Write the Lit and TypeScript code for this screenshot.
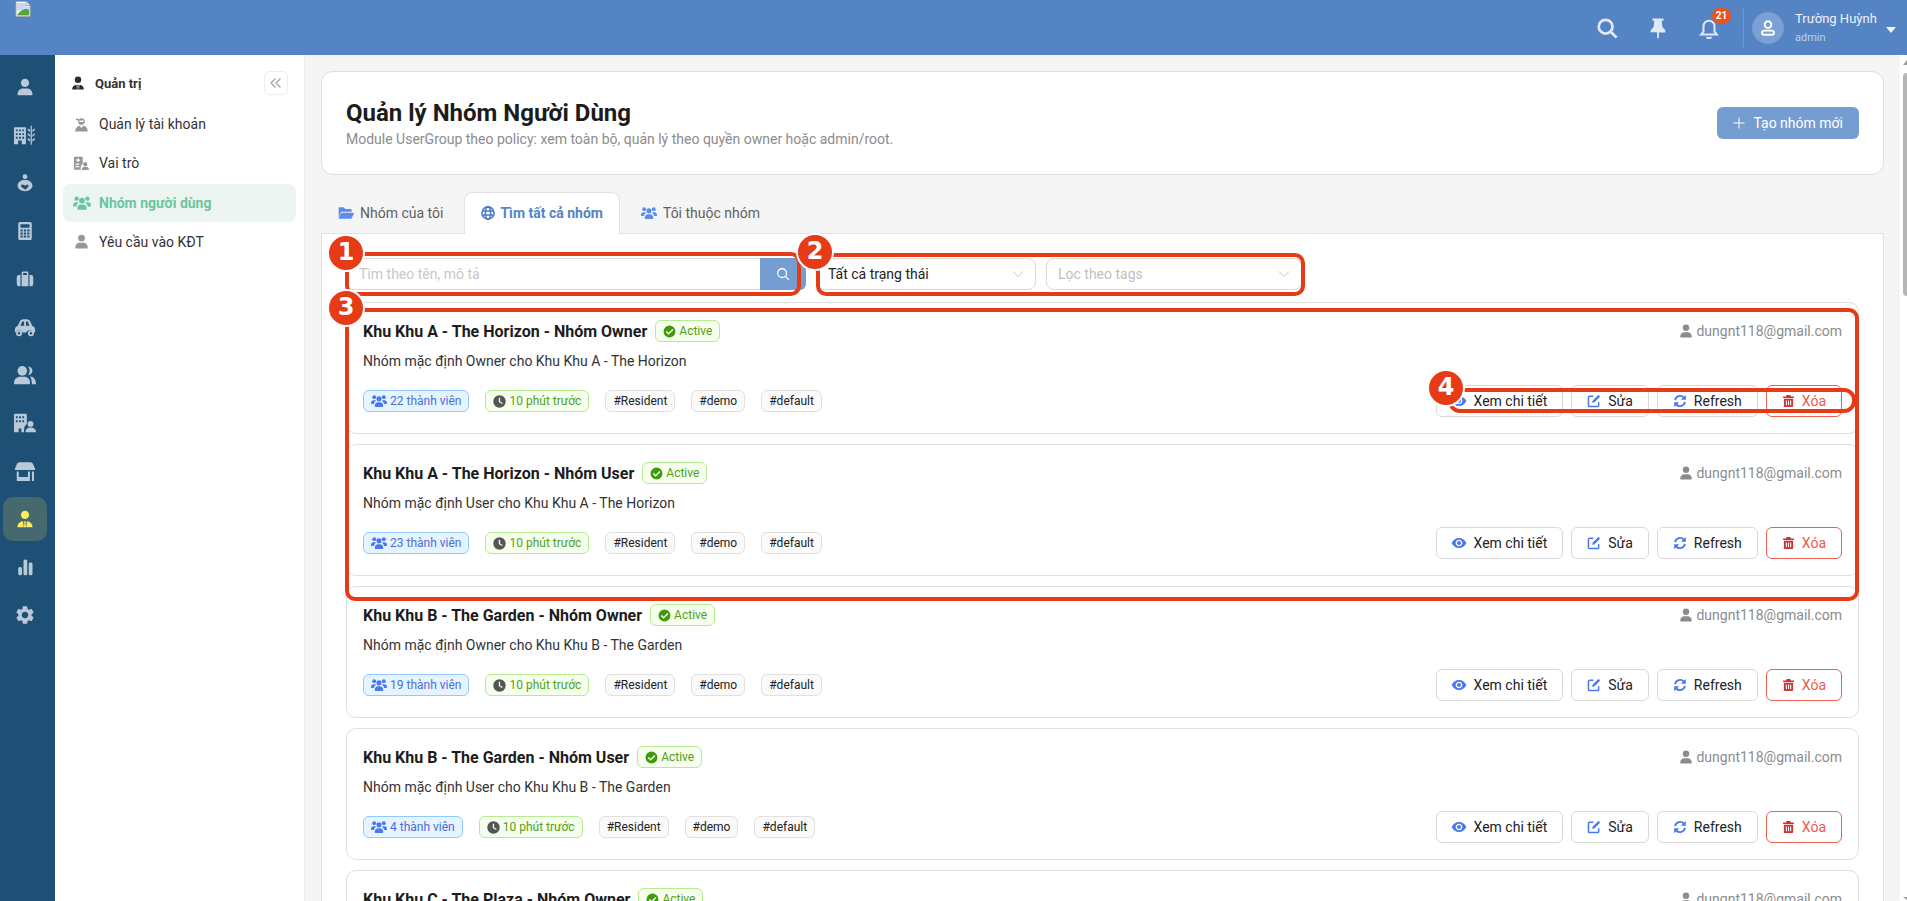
/**
 * app-root — "Quản lý Nhóm Người Dùng" admin page with numbered red callouts on top.
 */

import { LitElement, html, svg, css } from 'lit';
import { customElement } from 'lit/decorators.js';

const ICONS: Record<string, unknown> = {
  user: svg`<circle cx="12" cy="6.5" r="5.5"/><path d="M2 22c0-5 3.5-8 7-8h6c3.5 0 7 3 7 8 0 .6-.4 1-1 1H3c-.6 0-1-.4-1-1z"/>`,
  cityWheat: svg`<path fill-rule="evenodd" d="M0 3.5h13V22H8.5v-4h-4v4H0z M2 6v2h2V6z M5.5 6v2h2V6z M9 6v2h2V6z M2 10v2h2v-2z M5.5 10v2h2v-2z M9 10v2h2v-2z M2 14v2h2v-2z M5.5 14v2h2v-2z M9 14v2h2v-2z"/><path d="M18.2 2h1.3v20.5h-1.3z M15 4.5l2.6 2v2.2L15 6.7z M22.6 4.5L20 6.5v2.2l2.6-2z M15 9.7l2.6 2v2.3L15 12z M22.6 9.7L20 11.7V14l2.6-2z M15 15l2.6 2v2.3L15 17.3z M22.6 15L20 17v2.3l2.6-2z"/>`,
  careHeart: svg`<circle cx="12" cy="3.5" r="3.2"/><path fill-rule="evenodd" d="M12 7.5c5.5 0 10 3.8 10 8.2 0 4-4.5 7.3-10 7.3S2 19.700 2 15.700C2 11.300 6.500 7.500 12 7.500z M8.500 14c-1.800 0-2.500 2.400-.8 3.800l4.800 3.200 3.600-3.800c1.400-1.600 0-3.400-1.600-3-1 .2-1.700 1-2.200 1.600-.7-.8-2-1.800-3.800-1.800z"/>`,
  calculator: svg`<path fill-rule="evenodd" d="M5 0h14a2 2 0 0 1 2 2v20a2 2 0 0 1-2 2H5a2 2 0 0 1-2-2V2a2 2 0 0 1 2-2z M6 3v4.500h12V3z M6 10v2.500h3V10z M10.500 10v2.500h3V10z M15 10v2.500h3V10z M6 14v2.500h3V14z M10.500 14v2.500h3V14z M15 14v2.500h3V14z M6 18v2.500h3V18z M10.500 18v2.500h3V18z M15 18v2.500h3V18z"/>`,
  suitcase: svg`<path fill-rule="evenodd" d="M7.500 21.500V4c0-1.100.9-2 2-2h5c1.100 0 2 .9 2 2v17.500z M9.500 4v2.500h5V4z"/><path d="M6 6.500v15H4a3 3 0 0 1-3-3v-9a3 3 0 0 1 3-3z M18 6.500v15h2a3 3 0 0 0 3-3v-9a3 3 0 0 0-3-3z"/>`,
  car: svg`<path fill-rule="evenodd" d="M1 15c0-2 1-3.500 3-4l2.300-5C7 4.500 8.200 3.500 10 3.500h4c1.800 0 3 1 3.700 2.500l2.300 5c2 .5 3 2 3 4v2c0 .6-.4 1-1 1h-1.200a3.800 3.800 0 0 0-7.300 0H9.200a3.800 3.800 0 0 0-7.300 0H2c-.6 0-1-.4-1-1z M8.800 6.200L7 10.500h4V6h-1c-.5 0-1 0-1.200.2z M13 6v4.500h4l-1.800-4.300C15 6 14.500 6 14 6z"/><path fill-rule="evenodd" d="M5.500 15.500a3.300 3.300 0 1 1 0 6.600 3.300 3.300 0 0 1 0-6.600z M5.500 17.500a1.300 1.300 0 1 0 0 2.600 1.300 1.300 0 0 0 0-2.600z M18.500 15.500a3.300 3.300 0 1 1 0 6.600 3.300 3.300 0 0 1 0-6.600z M18.500 17.500a1.300 1.300 0 1 0 0 2.600 1.300 1.300 0 0 0 0-2.600z"/>`,
  users: svg`<circle cx="9" cy="7.500" r="5.200"/><path d="M0 21c0-4.500 3-7 7-7h4c4 0 6.500 2.500 6.500 7 0 .6-.4 1-1 1H1c-.6 0-1-.4-1-1z"/><path d="M15.500 2.800a4.500 4.500 0 1 1 0 9.200c1-1.200 1.500-2.800 1.500-4.600s-.5-3.300-1.500-4.600z M17.500 13.500c4 .3 6.500 3 6.500 8.500h-4.500c0-3.500-.5-6.500-2-8.500z"/>`,
  buildingUser: svg`<path fill-rule="evenodd" d="M1 2h12c.6 0 1 .4 1 1v10c-1.800 1-3 3.500-3 6v3H8v-4H5v4H1c-.6 0-1-.4-1-1V3c0-.6.4-1 1-1z M2 4.500v2.200h2V4.500z M5.500 4.500v2.200h2V4.500z M9 4.500v2.200h2V4.500z M2 9v2.200h2V9z M5.500 9v2.200h2V9z M9 9v2.200h2V9z"/><circle cx="18" cy="13" r="3.200"/><path d="M12.500 22c0-3.500 2-5.200 5.500-5.200s6 1.700 6 5.200z"/>`,
  store: svg`<path d="M1 9.500L3 5c.6-1.500 1.500-2.500 3.500-2.500h11c2 0 2.900 1 3.500 2.500l2 4.500c.3.900 0 1.500-1 1.500H2c-1 0-1.300-.6-1-1.500z M3 12.500h2.200v6h10v-6h2.200V22c0 .6-.4 1-1 1H4c-.6 0-1-.4-1-1z M19.600 12.500h2.200V23h-2.200z"/>`,
  userTie: svg`<circle cx="12" cy="6.500" r="5.500"/><path d="M2 23c0-4.500 2.800-7.500 7.500-8l.8 8z M22 23c0-4.500-2.800-7.500-7.500-8l-.8 8z M11 15h2l.2 1.500-.4 1 .6 5.500h-2.800l.6-5.500-.4-1z"/>`,
  chart: svg`<rect x="3" y="12" width="5" height="11" rx="2"/><rect x="10" y="2" width="5" height="21" rx="2"/><rect x="17" y="6" width="5" height="17" rx="2"/>`,
  gear: svg`<path d="M19.140 12.940c.04-.3.06-.61.06-.94 0-.32-.02-.64-.07-.94l2.030-1.580c.18-.14.23-.41.12-.61l-1.920-3.320c-.12-.22-.37-.29-.59-.22l-2.390.96c-.5-.38-1.030-.7-1.620-.94l-.36-2.540c-.04-.24-.24-.41-.48-.41h-3.840c-.24 0-.43.17-.47.41l-.36 2.540c-.59.24-1.130.57-1.620.94l-2.390-.96c-.22-.08-.47 0-.59.22L2.740 8.870c-.12.21-.08.47.12.61l2.030 1.580c-.05.3-.09.63-.09.94s.02.64.07.94l-2.030 1.580c-.18.14-.23.41-.12.61l1.920 3.320c.12.22.37.29.59.22l2.390-.96c.5.38 1.030.7 1.620.94l.36 2.540c.05.24.24.41.48.41h3.840c.24 0 .44-.17.47-.41l.36-2.540c.59-.24 1.130-.56 1.620-.94l2.390.96c.22.08.47 0 .59-.22l1.920-3.320c.12-.22.07-.47-.12-.61l-2.010-1.580zM12 15.600c-1.980 0-3.600-1.620-3.600-3.600s1.620-3.600 3.600-3.600 3.600 1.620 3.600 3.600-1.620 3.600-3.600 3.600z"/>`,
  hoodUser: svg`<path fill-rule="evenodd" d="M12 2c3.300 0 5.500 2.300 5.500 5s-2.200 5.500-5.500 5.500S6.500 10 6.500 7c0-.4 0-.7.1-1L3 4.500 3.500 2l4.700 1.500C9.200 2.600 10.500 2 12 2z M8.500 5.500v2.300h7V5.500z"/><path d="M2 23c0-5 3.500-8.500 7-9l3 3.500 3-3.500c3.500.5 7 4 7 9z"/>`,
  roleCard: svg`<path fill-rule="evenodd" d="M1 1h12c.6 0 1 .4 1 1v10.500c-2 1-3.300 3.500-3.300 6.500v3H1c-.6 0-1-.4-1-1V2c0-.6.4-1 1-1z M5.500 3.500v2.200H3.300v2h2.200v2.200h2V7.700h2.200v-2H7.500V3.500z M2.500 12v1.800h6V12z M2.500 16v1.800h6V16z"/><circle cx="18" cy="13" r="3.300"/><path d="M12.500 22.500c0-3.800 2-5.700 5.500-5.700s6 1.900 6 5.700z"/>`,
  users3: svg`<circle cx="4.800" cy="6.200" r="2.900"/><circle cx="19.200" cy="6.200" r="2.900"/><circle cx="12" cy="8.800" r="3.800"/><path d="M0 15c0-2.500 1.700-4 3.800-4h2c.7 0 1.300.2 1.800.5-1.800 1-3 3-3.100 5H1c-.6 0-1-.5-1-1.500z M24 15c0-2.500-1.700-4-3.800-4h-2c-.7 0-1.300.2-1.800.5 1.800 1 3 3 3.100 5H23c.6 0 1-.5 1-1.500z M5.700 19c0-3 2.100-5 4.800-5h3c2.700 0 4.800 2 4.800 5v1c0 .6-.4 1-1 1H6.700c-.6 0-1-.4-1-1z"/>`,
  folder: svg`<path d="M1 18.500V5c0-.8.7-1.500 1.500-1.500h6l2.500 2.500h8c.8 0 1.500.7 1.500 1.500V10H6.500c-1 0-1.800.5-2.300 1.400z"/><path d="M5.800 11.500H23c.8 0 1.200.7.900 1.400l-3.500 6.800c-.3.500-.8.800-1.400.8H1.800c-.7 0-1-.6-.7-1.200l3.400-7c.3-.5.800-.8 1.300-.8z"/>`,
  check: svg`<path fill-rule="evenodd" d="M12 1a11 11 0 1 1 0 22 11 11 0 0 1 0-22z M17.300 7.500L10.400 14.400 7 11l-1.900 1.900 5.300 5.300 8.800-8.800z"/>`,
  clock: svg`<path fill-rule="evenodd" d="M12 .5a11.500 11.500 0 1 1 0 23 11.500 11.500 0 0 1 0-23z M10.700 5v8l6 3.800 1.200-1.900-4.700-3V5z"/>`,
  eye: svg`<path d="M12 4.500C7 4.500 2.730 7.610 1 12c1.730 4.390 6 7.500 11 7.500s9.270-3.110 11-7.500c-1.730-4.390-6-7.500-11-7.500zM12 17c-2.760 0-5-2.240-5-5s2.240-5 5-5 5 2.240 5 5-2.240 5-5 5zm0-8c-1.660 0-3 1.340-3 3s1.340 3 3 3 3-1.340 3-3-1.340-3-3-3z"/>`,
  edit: svg`<path fill="none" stroke="currentColor" stroke-width="2.600" d="M20 14v5.500a2 2 0 0 1-2 2H4.500a2 2 0 0 1-2-2V6a2 2 0 0 1 2-2H11"/><path d="M9.500 11.500L18.500 2.500a1.600 1.600 0 0 1 2.300 0l.7.7a1.600 1.600 0 0 1 0 2.300l-9 9-3.500.7z"/>`,
  sync: svg`<path fill="none" stroke="currentColor" stroke-width="3.200" d="M3.500 10.500a8.800 8.800 0 0 1 15-4.500 M20.500 13.500a8.800 8.800 0 0 1-15 4.500"/><path d="M22 1.500V10h-8.500z M2 22.500V14h8.500z"/>`,
  trash: svg`<path fill-rule="evenodd" d="M8.500 1h7l1 2.500H22v3H2v-3h5.500z M3.500 8h17v13.500c0 .8-.7 1.500-1.500 1.500H5c-.8 0-1.500-.7-1.500-1.500z M7 11v9h2v-9z M11 11v9h2v-9z M15 11v9h2v-9z"/>`,
};

const icon = (name: string) => html`<svg class="ic" viewBox="0 0 24 24" fill="currentColor">${ICONS[name]}</svg>`;

const RAIL = [
  { name: 'user', size: 18 },
  { name: 'cityWheat', size: 22 },
  { name: 'careHeart', size: 18 },
  { name: 'calculator', size: 18 },
  { name: 'suitcase', size: 18 },
  { name: 'car', size: 22 },
  { name: 'users', size: 22 },
  { name: 'buildingUser', size: 22 },
  { name: 'store', size: 22 },
  { name: 'userTie', size: 18, active: true },
  { name: 'chart', size: 18 },
  { name: 'gear', size: 22 },
];

const MENU = [
  { label: 'Quản lý tài khoản', icon: 'hoodUser' },
  { label: 'Vai trò', icon: 'roleCard' },
  { label: 'Nhóm người dùng', icon: 'users3', active: true },
  { label: 'Yêu cầu vào KĐT', icon: 'user' },
];

const GROUPS = [
  { name: 'Khu Khu A - The Horizon - Nhóm Owner', desc: 'Nhóm mặc định Owner cho Khu Khu A - The Horizon', members: 22 },
  { name: 'Khu Khu A - The Horizon - Nhóm User', desc: 'Nhóm mặc định User cho Khu Khu A - The Horizon', members: 23 },
  { name: 'Khu Khu B - The Garden - Nhóm Owner', desc: 'Nhóm mặc định Owner cho Khu Khu B - The Garden', members: 19 },
  { name: 'Khu Khu B - The Garden - Nhóm User', desc: 'Nhóm mặc định User cho Khu Khu B - The Garden', members: 4 },
  { name: 'Khu Khu C - The Plaza - Nhóm Owner', desc: 'Nhóm mặc định Owner cho Khu Khu C - The Plaza', members: 16 },
];

@customElement('app-root')
export class AppRoot extends LitElement {
  static override styles = css`
    :host {
      display: block;
      position: relative;
      height: 901px;
      overflow: hidden;
      font-family: Roboto, 'Liberation Sans', sans-serif;
      font-size: 14px;
      color: #222;
    }

    .ic {
      display: block;
      flex: none;
      width: 14px;
      height: 14px;
    }

    /* top bar */
    .topbar {
      display: flex;
      align-items: center;
      height: 55px;
      background: #5484c4;
      color: #dfe8f5;
    }
    .logo {
      align-self: flex-start;
      width: 16px;
      height: 16px;
      margin: 1px 0 0 15px;
    }
    .top-actions {
      display: flex;
      align-items: center;
      margin-left: auto;
    }
    .top-btn {
      position: relative;
      width: 22px;
      height: 22px;
      margin-right: 29px;
    }
    .top-btn svg {
      width: 22px;
      height: 22px;
    }
    .badge {
      position: absolute;
      top: -9px;
      left: 14px;
      width: 19px;
      height: 16px;
      border-radius: 10px;
      background: #e8541e;
      color: #fff;
      font-size: 10px;
      font-weight: 700;
      line-height: 16px;
      text-align: center;
    }
    .top-divider {
      width: 1px;
      height: 38px;
      margin-left: -6px;
      background: #6f98cf;
    }
    .avatar {
      display: flex;
      align-items: center;
      justify-content: center;
      width: 32px;
      height: 32px;
      margin-left: 8px;
      border-radius: 50%;
      background: #7aa0d5;
      color: #fff;
    }
    .avatar svg {
      width: 18px;
      height: 18px;
    }
    .who {
      margin-left: 11px;
      width: 91px;
    }
    .who-name {
      color: #eef3fa;
      font-size: 13px;
      line-height: 18px;
    }
    .who-role {
      margin-top: 3px;
      color: #bcd0ea;
      font-size: 11px;
      line-height: 14px;
    }
    .caret {
      width: 0;
      height: 0;
      margin: 4px 11px 0 0;
      border-left: 5px solid transparent;
      border-right: 5px solid transparent;
      border-top: 6px solid #eef3fa;
    }

    .body {
      display: flex;
      height: 846px;
    }

    /* icon rail */
    .rail {
      flex: none;
      display: flex;
      flex-direction: column;
      align-items: center;
      gap: 4px;
      width: 55px;
      padding: 10px 5px 0 0;
      box-sizing: border-box;
      background: #1d5074;
      color: #b9c9d8;
    }
    .rail-item {
      display: flex;
      align-items: center;
      justify-content: center;
      width: 44px;
      height: 44px;
      border-radius: 10px;
    }
    .rail-item.active {
      background: #46696f;
      color: #ffeb5c;
    }

    /* second level menu */
    .side {
      flex: none;
      width: 250px;
      box-sizing: border-box;
      border-right: 1px solid #ececec;
      background: #fff;
      padding: 16px 8px 0;
    }
    .side-head {
      display: flex;
      align-items: center;
      height: 24px;
      padding: 0 8px;
      font-size: 13px;
      font-weight: 700;
      color: #333;
    }
    .side-head > svg {
      width: 14px;
      height: 14px;
      margin-right: 10px;
      color: #2b2b2b;
    }
    .collapse {
      display: flex;
      align-items: center;
      justify-content: center;
      box-sizing: border-box;
      width: 24px;
      height: 24px;
      margin-left: auto;
      border: 1px solid #eee;
      border-radius: 6px;
      color: #9aa3af;
    }
    .collapse svg {
      width: 12px;
      height: 12px;
    }
    .menu {
      display: flex;
      flex-direction: column;
      gap: 1.3px;
      margin-top: 10px;
    }
    .menu-item {
      display: flex;
      align-items: center;
      height: 38px;
      padding-left: 11px;
      border-radius: 8px;
      color: #333;
      font-size: 14px;
    }
    .menu-item svg {
      width: 15px;
      height: 15px;
      margin-right: 10px;
      color: #979797;
    }
    .menu-item.active {
      background: #ecf5f2;
      color: #6bc5a0;
      font-weight: 700;
    }
    .menu-item.active svg {
      width: 18px;
      height: 18px;
      margin: 0 8px 0 -1px;
      color: #6bc5a0;
    }

    /* page */
    .main {
      flex: 1;
      min-width: 0;
      padding: 16px;
      background: #f5f5f5;
      overflow: hidden;
    }
    .hero {
      display: flex;
      align-items: center;
      justify-content: space-between;
      height: 104px;
      box-sizing: border-box;
      padding: 0 24px;
      border: 1px solid #dedede;
      border-radius: 12px;
      background: #fff;
    }
    .hero h1 {
      margin: 0;
      color: #1c1c1c;
      font-size: 24px;
      font-weight: 700;
      line-height: 32px;
    }
    .hero p {
      margin: 0;
      color: #8c8c8c;
      font-size: 14px;
      line-height: 20px;
    }
    .create {
      display: flex;
      align-items: center;
      gap: 8px;
      height: 32px;
      padding: 0 16px;
      border-radius: 6px;
      background: #769dd1;
      color: #fff;
      font-size: 14px;
    }
    .create svg {
      width: 12px;
      height: 12px;
    }

    .tabs {
      display: flex;
      gap: 4px;
      margin: 17px 0 -1px;
      position: relative;
    }
    .tab {
      display: flex;
      align-items: center;
      gap: 6px;
      height: 40px;
      padding: 0 16px 1px;
      border: 1px solid transparent;
      border-bottom: none;
      border-radius: 8px 8px 0 0;
      color: #5f5f5f;
    }
    .tab svg {
      width: 16px;
      height: 16px;
      color: #5b8def;
    }
    .tab.active {
      gap: 5px;
      border-color: #e2e2e2;
      background: #fff;
      color: #5484c4;
      font-weight: 700;
    }
    .tab.active svg {
      width: 14px;
      height: 14px;
      color: #4a7ac0;
    }

    .panel {
      padding: 24px;
      border: 1px solid #e2e2e2;
      border-bottom: none;
      background: #fff;
    }
    .filters {
      display: flex;
      gap: 10px;
      margin-bottom: 12px;
    }
    .search {
      display: flex;
      width: 460px;
      height: 32px;
    }
    .search-input {
      flex: 1;
      padding-left: 12px;
      border: 1px solid #d9d9d9;
      border-right: none;
      border-radius: 6px 0 0 6px;
      color: #c8c8c8;
      line-height: 30px;
    }
    .search-btn {
      display: flex;
      align-items: center;
      justify-content: center;
      width: 46px;
      border-radius: 0 6px 6px 0;
      background: #769dd1;
      color: #fff;
    }
    .search-btn svg {
      width: 14px;
      height: 14px;
    }
    .select {
      display: flex;
      align-items: center;
      justify-content: space-between;
      box-sizing: border-box;
      width: 220px;
      height: 32px;
      padding: 0 11px;
      border: 1px solid #d9d9d9;
      border-radius: 8px;
    }
    .select.wide {
      width: 256px;
      color: #bfbfbf;
    }
    .select svg {
      width: 12px;
      height: 12px;
      color: #bbb;
    }

    /* group cards */
    .card {
      height: 132px;
      box-sizing: border-box;
      margin-bottom: 10px;
      padding: 17px 16px 16px;
      border: 1px solid #dedede;
      border-radius: 10px;
      background: #fff;
    }
    .card-top {
      display: flex;
      align-items: center;
      height: 22px;
    }
    .card-name {
      margin-right: 8px;
      color: #1c1c1c;
      font-size: 16px;
      font-weight: 700;
    }
    .owner {
      display: flex;
      align-items: center;
      gap: 3px;
      margin-left: auto;
      color: #8c8c8c;
    }
    .owner svg {
      width: 14px;
      height: 14px;
    }
    .card-desc {
      margin-top: 8px;
      color: #333;
      line-height: 22px;
    }
    .card-foot {
      display: flex;
      align-items: center;
      justify-content: space-between;
      margin-top: 13px;
    }
    .tags,
    .actions {
      display: flex;
      gap: 8px;
    }
    .tags {
      gap: 16px;
    }
    .tag {
      display: inline-flex;
      align-items: center;
      gap: 3px;
      box-sizing: border-box;
      height: 22px;
      padding: 0 7px;
      border: 1px solid #e0e0e0;
      border-radius: 6px;
      background: #fafafa;
      color: #222;
      font-size: 12px;
    }
    .tag svg {
      width: 13px;
      height: 13px;
    }
    .tag.blue {
      border-color: #91caff;
      background: #e6f4ff;
      color: #4a6fd8;
    }
    .tag.blue svg {
      width: 16px;
      height: 16px;
      color: #4a78ee;
    }
    .tag.green {
      border-color: #b7eb8f;
      background: #f6ffed;
      color: #52a01c;
    }
    .tag.green svg {
      color: #3f9a0a;
    }
    .tag.green .clock {
      color: #555;
    }
    .btn {
      display: flex;
      align-items: center;
      gap: 7px;
      box-sizing: border-box;
      height: 32px;
      padding: 0 15px;
      border: 1px solid #d9d9d9;
      border-radius: 6px;
      background: #fff;
      color: #222;
    }
    .btn svg {
      width: 14px;
      height: 14px;
      color: #4a78ee;
    }
    .btn .eye {
      width: 16px;
      height: 16px;
      margin-left: -1px;
    }
    .btn.danger {
      border-color: #e8604c;
      color: #f0584a;
    }
    .btn.danger svg {
      width: 13px;
      height: 14px;
      color: #cf3030;
    }

    /* clipped window scrollbar */
    .scrollbar {
      flex: none;
      position: relative;
      width: 7px;
      background: #fff;
    }
    .thumb {
      margin: 18px 0 0 3px;
      height: 223px;
      border-radius: 4px 0 0 4px;
      background: #b5b5b5;
    }
    .arrow {
      position: absolute;
      left: 3px;
      width: 0;
      height: 0;
      border-right: 4px solid #9a9a9a;
    }
    .arrow.up {
      top: 5px;
      border-top: 5px solid transparent;
    }
    .arrow.down {
      bottom: 1px;
      border-bottom: 3px solid transparent;
    }

    /* red callouts drawn on top of the screenshot */
    .mark {
      position: absolute;
      box-sizing: border-box;
      border: 4px solid #e73a16;
      pointer-events: none;
    }
    .m1 { left: 345px; top: 252px; width: 456px; height: 44px; border-radius: 10px; }
    .m2 { left: 816px; top: 253px; width: 489px; height: 43px; border-radius: 10px; }
    .m3 { left: 345px; top: 308px; width: 1514px; height: 293px; border-radius: 10px; }
    .m4 { left: 1448px; top: 388px; width: 408px; height: 25px; border-radius: 12px; }
    .pin {
      position: absolute;
      box-sizing: border-box;
      width: 38px;
      height: 38px;
      border: 2px solid #fff;
      border-radius: 50%;
      background: #e73a16;
      color: #fff;
      font-family: 'DejaVu Sans', sans-serif;
      font-size: 24px;
      font-weight: 700;
      line-height: 33px;
      text-align: center;
    }
    .p1 { left: 327px; top: 234px; }
    .p2 { left: 796px; top: 233px; }
    .p3 { left: 327px; top: 289px; }
    .p4 { left: 1427px; top: 369px; }
  `;

  private renderCard(g: (typeof GROUPS)[number]) {
    return html`
      <div class="card">
        <div class="card-top">
          <span class="card-name">${g.name}</span>
          <span class="tag green">${icon('check')}Active</span>
          <span class="owner">${icon('user')}dungnt118@gmail.com</span>
        </div>
        <div class="card-desc">${g.desc}</div>
        <div class="card-foot">
          <div class="tags">
            <span class="tag blue">${icon('users3')}${g.members} thành viên</span>
            <span class="tag green"><svg class="ic clock" viewBox="0 0 24 24" fill="currentColor">${ICONS.clock}</svg>10 phút trước</span>
            <span class="tag">#Resident</span>
            <span class="tag">#demo</span>
            <span class="tag">#default</span>
          </div>
          <div class="actions">
            <span class="btn"><svg class="ic eye" viewBox="0 0 24 24" fill="currentColor">${ICONS.eye}</svg>Xem chi tiết</span>
            <span class="btn">${icon('edit')}Sửa</span>
            <span class="btn">${icon('sync')}Refresh</span>
            <span class="btn danger">${icon('trash')}Xóa</span>
          </div>
        </div>
      </div>
    `;
  }

  override render() {
    const chevron = html`<svg class="ic" viewBox="0 0 24 24" fill="none" stroke="currentColor" stroke-width="1.800"><path d="M2 7l10 10L22 7"/></svg>`;
    const searchIcon = html`<svg class="ic" viewBox="0 0 24 24" fill="none" stroke="currentColor" stroke-width="2.200"><circle cx="10.500" cy="10.500" r="7.500"/><path d="M16 16l6 6"/></svg>`;

    return html`
      <header class="topbar">
        <svg class="logo" viewBox="0 0 16 16">
          <path d="M1 .5h10l4 4v11H1z" fill="#fff" stroke="#a9a9a9"/>
          <path d="M2 2h8.500v3.500H14V8L2 10z" fill="#c6d8f5"/>
          <path d="M2 14.500c2-4 6-6.500 9-6.500l3 .5v6z" fill="#5aa33a"/>
          <path d="M11 .5v4h4" fill="#eee" stroke="#a9a9a9"/>
        </svg>
        <div class="top-actions">
          <div class="top-btn">
            <svg class="ic" viewBox="0 0 24 24" fill="none" stroke="currentColor" stroke-width="3"><circle cx="10.500" cy="10.500" r="7.500"/><path d="M16 16l6.500 6.500"/></svg>
          </div>
          <div class="top-btn">
            <svg class="ic" viewBox="0 0 24 24" fill="currentColor"><path d="M6 1.500h12v2.500h-2l.8 7 3.200 3.500v2.500h-7V22l-1 2-1-2v-5.500H4V14.500L7.200 11 8 4H6z"/></svg>
          </div>
          <div class="top-btn">
            <svg class="ic" viewBox="0 0 24 24" fill="none" stroke="currentColor" stroke-width="2.200"><path d="M6 16V10a6 6 0 0 1 12 0v6l2.500 3h-17z"/><path d="M10 21.500a2 2 0 0 0 4 0" /></svg>
            <span class="badge">21</span>
          </div>
          <div class="top-divider"></div>
          <div class="avatar">
            <svg class="ic" viewBox="0 0 24 24" fill="none" stroke="currentColor" stroke-width="2.400"><circle cx="12" cy="7.500" r="4.500"/><rect x="4" y="15.500" width="16" height="5.500" rx="2.700"/></svg>
          </div>
          <div class="who">
            <div class="who-name">Trường Huỳnh</div>
            <div class="who-role">admin</div>
          </div>
          <div class="caret"></div>
        </div>
      </header>

      <div class="body">
        <nav class="rail">
          ${RAIL.map(
            (r) => html`<div class="rail-item ${r.active ? 'active' : ''}">
              <svg class="ic" viewBox="0 0 24 24" fill="currentColor" style="width:${r.size}px;height:${r.size}px">${ICONS[r.name]}</svg>
            </div>`,
          )}
        </nav>

        <aside class="side">
          <div class="side-head">
            ${icon('userTie')}Quản trị
            <span class="collapse">
              <svg class="ic" viewBox="0 0 24 24" fill="none" stroke="currentColor" stroke-width="2.400"><path d="M11 3l-9 9 9 9M21 3l-9 9 9 9"/></svg>
            </span>
          </div>
          <div class="menu">
            ${MENU.map((m) => html`<div class="menu-item ${m.active ? 'active' : ''}">${icon(m.icon)}${m.label}</div>`)}
          </div>
        </aside>

        <main class="main">
          <section class="hero">
            <div>
              <h1>Quản lý Nhóm Người Dùng</h1>
              <p>Module UserGroup theo policy: xem toàn bộ, quản lý theo quyền owner hoặc admin/root.</p>
            </div>
            <div class="create">
              <svg class="ic" viewBox="0 0 24 24" fill="none" stroke="currentColor" stroke-width="2"><path d="M12 1v22M1 12h22"/></svg>
              Tạo nhóm mới
            </div>
          </section>

          <div class="tabs">
            <div class="tab">${icon('folder')}Nhóm của tôi</div>
            <div class="tab active">
              <svg class="ic" viewBox="0 0 24 24" fill="none" stroke="currentColor" stroke-width="2.600"><circle cx="12" cy="12" r="10.500"/><ellipse cx="12" cy="12" rx="4.500" ry="10.500"/><path d="M2 8.500h20M2 15.500h20"/></svg>
              Tìm tất cả nhóm
            </div>
            <div class="tab">${icon('users3')}Tôi thuộc nhóm</div>
          </div>

          <section class="panel">
            <div class="filters">
              <div class="search">
                <div class="search-input">Tìm theo tên, mô tả</div>
                <div class="search-btn">${searchIcon}</div>
              </div>
              <div class="select">Tất cả trạng thái ${chevron}</div>
              <div class="select wide">Lọc theo tags ${chevron}</div>
            </div>
            ${GROUPS.map((g) => this.renderCard(g))}
          </section>
        </main>

        <div class="scrollbar">
          <div class="arrow up"></div>
          <div class="thumb"></div>
          <div class="arrow down"></div>
        </div>
      </div>

      <div class="mark m1"></div>
      <div class="mark m2"></div>
      <div class="mark m3"></div>
      <div class="mark m4"></div>
      <div class="pin p1">1</div>
      <div class="pin p2">2</div>
      <div class="pin p3">3</div>
      <div class="pin p4">4</div>
    `;
  }
}
